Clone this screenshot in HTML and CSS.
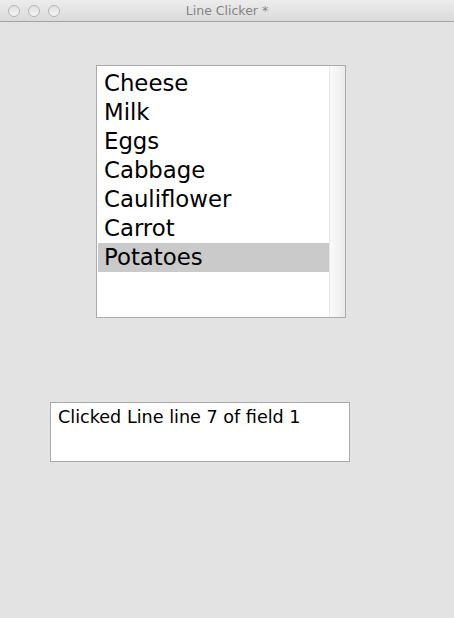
FILE: index.html
```html
<!DOCTYPE html>
<html>
<head>
<meta charset="utf-8">
<link rel="stylesheet" href="styles.css">
</head>
<body>
<div class="window">
  <div class="titlebar">
    <div class="lights">
      <span class="light"></span><span class="light"></span><span class="light"></span>
    </div>
    <div class="title">Line Clicker *</div>
  </div>
  <div class="content">
    <div class="listbox">
      <div class="items">
        <div class="item">Cheese</div>
        <div class="item">Milk</div>
        <div class="item">Eggs</div>
        <div class="item">Cabbage</div>
        <div class="item">Cauliflower</div>
        <div class="item">Carrot</div>
        <div class="item selected">Potatoes</div>
      </div>
      <div class="scrolltrack"></div>
    </div>
    <div class="field">Clicked Line line 7 of field 1</div>
  </div>
</div>
</body>
</html>
```
FILE: styles.css
```css
html, body {
  margin: 0;
  padding: 0;
  background: #e3e3e3;
}
.window {
  width: 454px;
  height: 618px;
  background: #e3e3e3;
  font-family: "DejaVu Sans", sans-serif;
}
.titlebar {
  height: 21px;
  border-bottom: 1px solid #a3a3a3;
  background: linear-gradient(#ececec, #dadada);
  display: flex;
  align-items: center;
  position: relative;
}
.lights {
  display: flex;
  gap: 8px;
  padding-left: 8px;
}
.light {
  width: 10px;
  height: 10px;
  border-radius: 50%;
  border: 1px solid #b5b5b5;
  background: linear-gradient(#e2e2e2, #f3f3f3);
}
.title {
  position: absolute;
  left: 0;
  right: 0;
  top: 0;
  height: 21px;
  line-height: 21px;
  text-align: center;
  font-size: 12.5px;
  color: #858585;
  font-family: "DejaVu Sans", sans-serif;
}
.content {
  display: flex;
  flex-direction: column;
}
.listbox {
  margin: 43px 0 0 96px;
  width: 248px;
  height: 251px;
  border: 1px solid #ababab;
  background: #ffffff;
  display: flex;
}
.items {
  flex: 1;
  padding: 3px 0 0 1px;
}
.item {
  height: 29px;
  line-height: 29px;
  font-size: 22.8px;
  padding-left: 6px;
  color: #000;
}
.item.selected {
  background: #cacaca;
}
.scrolltrack {
  width: 15px;
  border-left: 1px solid #e6e6e6;
  background: linear-gradient(90deg, #fafafa, #f2f2f2 60%, #eaeaea);
}
.field {
  margin: 84px 0 0 50px;
  border: 1px solid #a8a8a8;
  background: #fff;
  font-size: 17.6px;
  padding: 4px 0 0 7px;
  box-sizing: border-box;
  width: 300px;
  height: 60px;
  color: #000;
}
```
